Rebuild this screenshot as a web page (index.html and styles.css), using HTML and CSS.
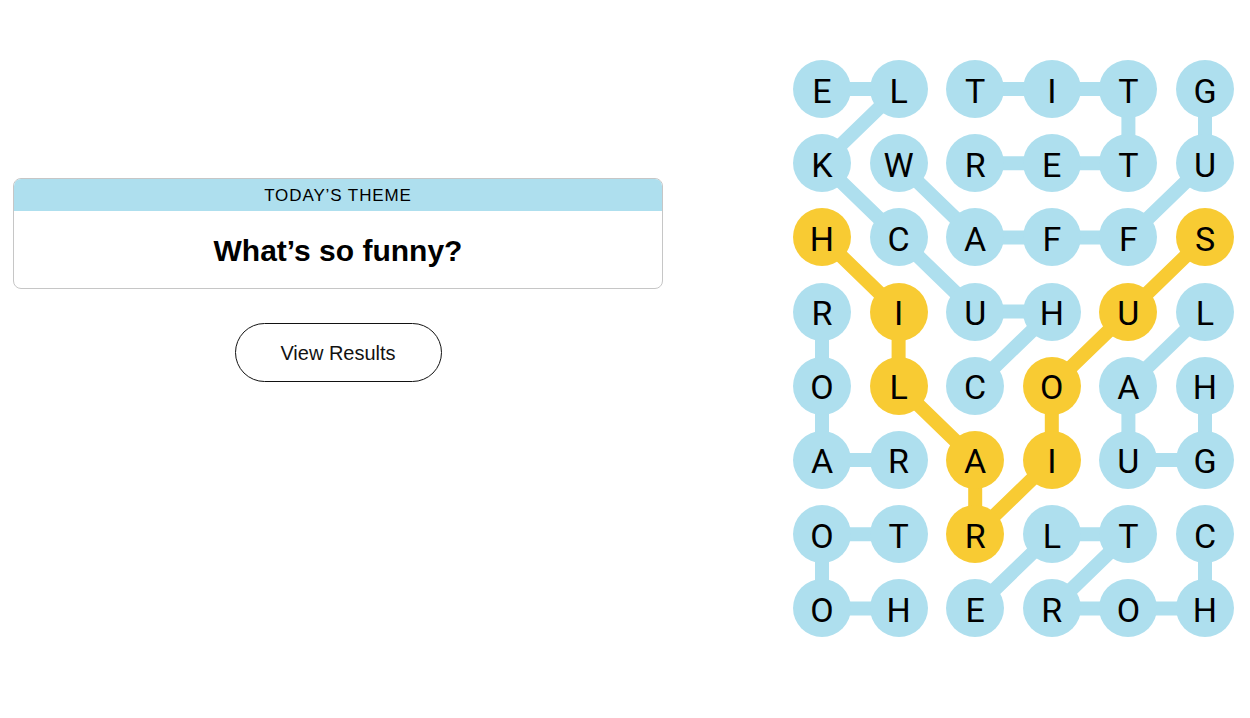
FILE: index.html
```html
<!DOCTYPE html>
<html lang="en">
<head>
  <meta charset="UTF-8">
  <meta name="viewport" content="width=device-width, initial-scale=1.0">
  <title>Strands</title>
  <link rel="stylesheet" href="styles.css">
</head>
<body>

  <div class="page">
    <div class="side">
      <div class="theme-card">
        <div class="theme-head">Today’s Theme</div>
        <div class="theme-body">What’s so funny?</div>
      </div>
      <button class="results-btn">View Results</button>
    </div>

    <div class="board">
      <svg class="links" width="441" height="577" viewBox="0 0 441 577">
        <g class="found">
          <polyline points="182.2,325.8 258.8,251.6 182.2,251.6 105.6,177.4 29,103.2 105.6,29 29,29"/>
          <polyline points="182.2,29 258.8,29 335.4,29 335.4,103.2 258.8,103.2 182.2,103.2"/>
          <polyline points="412,29 412,103.2 335.4,177.4 258.8,177.4 182.2,177.4 105.6,103.2"/>
          <polyline points="29,251.6 29,325.8 29,400 105.6,400"/>
          <polyline points="412,251.6 335.4,325.8 335.4,400 412,400 412,325.8"/>
          <polyline points="105.6,548.4 29,548.4 29,474.2 105.6,474.2"/>
          <polyline points="412,474.2 412,548.4 335.4,548.4 258.8,548.4 335.4,474.2 258.8,474.2 182.2,548.4"/>
        </g>
        <g class="span">
          <polyline points="29,177.4 105.6,251.6 105.6,325.8 182.2,400 182.2,474.2 258.8,400 258.8,325.8 335.4,251.6 412,177.4"/>
        </g>
      </svg>

      <div class="grid">
        <div class="cell">E</div><div class="cell">L</div><div class="cell">T</div><div class="cell">I</div><div class="cell">T</div><div class="cell">G</div>
        <div class="cell">K</div><div class="cell">W</div><div class="cell">R</div><div class="cell">E</div><div class="cell">T</div><div class="cell">U</div>
        <div class="cell spangram">H</div><div class="cell">C</div><div class="cell">A</div><div class="cell">F</div><div class="cell">F</div><div class="cell spangram">S</div>
        <div class="cell">R</div><div class="cell spangram">I</div><div class="cell">U</div><div class="cell">H</div><div class="cell spangram">U</div><div class="cell">L</div>
        <div class="cell">O</div><div class="cell spangram">L</div><div class="cell">C</div><div class="cell spangram">O</div><div class="cell">A</div><div class="cell">H</div>
        <div class="cell">A</div><div class="cell">R</div><div class="cell spangram">A</div><div class="cell spangram">I</div><div class="cell">U</div><div class="cell">G</div>
        <div class="cell">O</div><div class="cell">T</div><div class="cell spangram">R</div><div class="cell">L</div><div class="cell">T</div><div class="cell">C</div>
        <div class="cell">O</div><div class="cell">H</div><div class="cell">E</div><div class="cell">R</div><div class="cell">O</div><div class="cell">H</div>
      </div>
    </div>
  </div>

</body>
</html>
```

FILE: styles.css
```css
body {
  margin: 0;
  font-family: "Liberation Sans", Arial, sans-serif;
  color: #121212;
  background-color: #fff;
}
.page {
  display: flex;
  align-items: flex-start;
}
.side {
  width: 650px;
  margin-left: 13px;
  padding-top: 178px;
  display: flex;
  flex-direction: column;
  align-items: center;
}
.theme-card {
  width: 100%;
  box-sizing: border-box;
  border: 1px solid #c6c6c6;
  border-radius: 8px;
  overflow: hidden;
}
.theme-head {
  height: 32px;
  line-height: 33px;
  background-color: #aedfee;
  text-align: center;
  text-transform: uppercase;
  font-size: 17px;
  letter-spacing: 0.9px;
  color: #000;
}
.theme-body {
  height: 77px;
  padding-top: 3px;
  box-sizing: border-box;
  display: flex;
  align-items: center;
  justify-content: center;
  font-size: 30px;
  font-weight: bold;
  color: #000;
}
.results-btn {
  margin-top: 34px;
  width: 207px;
  height: 59px;
  padding-top: 3px;
  border: 1px solid #121212;
  border-radius: 30px;
  background-color: #fff;
  font-family: "Liberation Sans", Arial, sans-serif;
  font-size: 20px;
  color: #121212;
  cursor: pointer;
}
.board {
  position: relative;
  margin-left: 130px;
  margin-top: 60px;
  width: 441px;
  height: 577px;
}
.links {
  position: absolute;
  top: 0;
  left: 0;
}
.links polyline {
  fill: none;
  stroke-width: 14;
  stroke-linejoin: round;
}
.found polyline {
  stroke: #aedfee;
}
.span polyline {
  stroke: #f8cb33;
}
.grid {
  position: relative;
  display: grid;
  grid-template-columns: repeat(6, 58px);
  grid-auto-rows: 58px;
  column-gap: 18.6px;
  row-gap: 16.2px;
}
.cell {
  display: flex;
  align-items: center;
  justify-content: center;
  border-radius: 50%;
  background-color: #aedfee;
  font-family: Roboto, "Liberation Sans", sans-serif;
  font-size: 34px;
  color: #000;
  padding-top: 3px;
  box-sizing: border-box;
}
.cell.spangram {
  background-color: #f8cb33;
}
```
